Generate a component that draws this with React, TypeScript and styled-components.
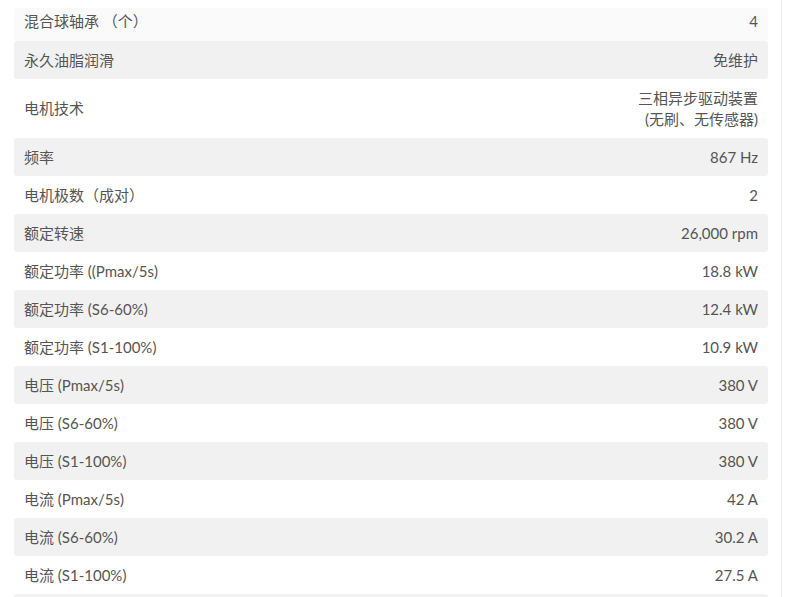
import styled, { createGlobalStyle } from "styled-components";

const GlobalStyle = createGlobalStyle`
  html, body {
    margin: 0;
    padding: 0;
    background: #ffffff;
    overflow: hidden;
  }
  body {
    font-family: Lato, "Noto Sans CJK SC", sans-serif;
  }
`;

interface ISpec {
  label: string;
  value: string[];
}

const specs: ISpec[] = [
  { label: "混合球轴承 （个）", value: ["4"] },
  { label: "永久油脂润滑", value: ["免维护"] },
  { label: "电机技术", value: ["三相异步驱动装置", "(无刷、无传感器)"] },
  { label: "频率", value: ["867 Hz"] },
  { label: "电机极数（成对）", value: ["2"] },
  { label: "额定转速", value: ["26,000 rpm"] },
  { label: "额定功率 ((Pmax/5s)", value: ["18.8 kW"] },
  { label: "额定功率 (S6-60%)", value: ["12.4 kW"] },
  { label: "额定功率 (S1-100%)", value: ["10.9 kW"] },
  { label: "电压 (Pmax/5s)", value: ["380 V"] },
  { label: "电压 (S6-60%)", value: ["380 V"] },
  { label: "电压 (S1-100%)", value: ["380 V"] },
  { label: "电流 (Pmax/5s)", value: ["42 A"] },
  { label: "电流 (S6-60%)", value: ["30.2 A"] },
  { label: "电流 (S1-100%)", value: ["27.5 A"] },
  { label: "功率因数", value: ["0.85"] },
];

const Frame = styled.div`
  width: 782px;
  height: 100vh;
  box-sizing: border-box;
  border-right: 1px solid #ededed;
  padding: 8px 15px 0 14px;
`;

const Table = styled.div`
  display: flex;
  flex-direction: column;
  width: 754px;
`;

const Row = styled.div<{ $shade: "none" | "faint" | "grey"; $clipped?: boolean }>`
  display: flex;
  justify-content: space-between;
  align-items: center;
  padding: ${(p) => (p.$clipped ? "3px 10px 9px" : "8.5px 10px")};
  border-radius: 3px;
  font-size: 15px;
  line-height: 21px;
  color: #555555;
  background: ${(p) =>
    p.$shade === "grey" ? "#f1f1f1" : p.$shade === "faint" ? "#fafafa" : "transparent"};
`;

const Label = styled.span`
  white-space: nowrap;
`;

const Value = styled.span`
  text-align: right;
  white-space: nowrap;
  display: flex;
  flex-direction: column;
  align-items: flex-end;
`;

export default function App() {
  return (
    <>
      <GlobalStyle />
      <Frame>
        <Table>
          {specs.map((s, i) => (
            <Row
              key={s.label}
              $clipped={i === 0}
              $shade={i === 0 ? "faint" : i % 2 === 1 ? "grey" : "none"}
            >
              <Label>{s.label}</Label>
              <Value>
                {s.value.map((v) => (
                  <span key={v}>{v}</span>
                ))}
              </Value>
            </Row>
          ))}
        </Table>
      </Frame>
    </>
  );
}
